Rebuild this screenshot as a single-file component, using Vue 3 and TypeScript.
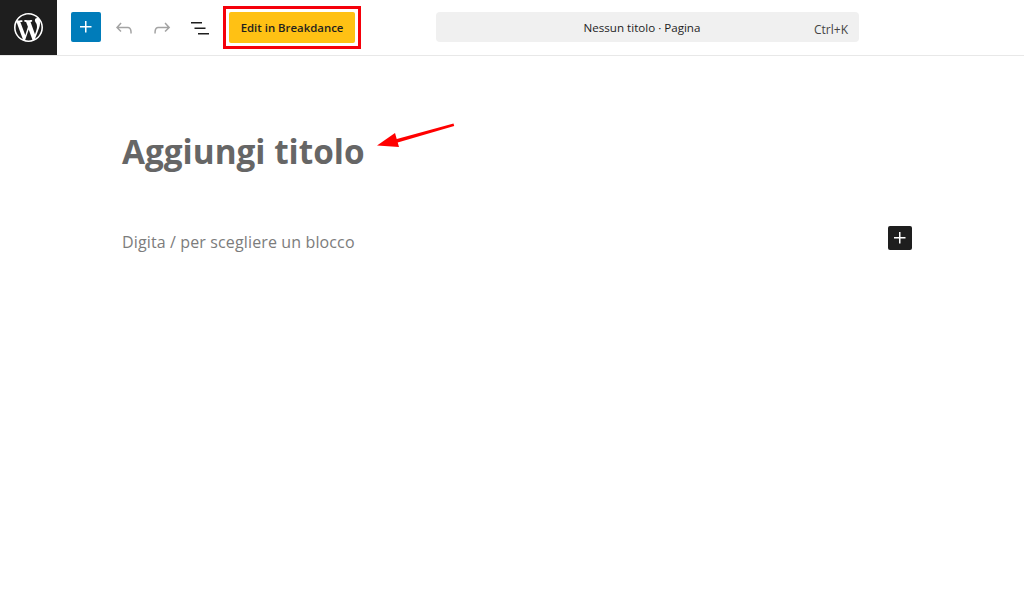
<script setup lang="ts">
const wp = "M20 10c0-5.51-4.49-10-10-10C4.48 0 0 4.49 0 10c0 5.52 4.48 10 10 10 5.51 0 10-4.48 10-10zM7.78 15.37L4.37 6.22c.55-.02 1.17-.08 1.17-.08.5-.06.44-1.13-.06-1.11 0 0-1.45.11-2.37.11-.18 0-.37 0-.58-.01C4.12 2.69 6.87 1.11 10 1.11c2.33 0 4.45.87 6.05 2.34-.68-.11-1.65.39-1.65 1.58 0 .74.45 1.36.9 2.1.35.61.55 1.36.55 2.46 0 1.49-1.4 5-1.4 5l-3.03-8.37c.54-.02.82-.17.82-.17.5-.05.44-1.25-.06-1.22 0 0-1.44.12-2.38.12-.87 0-2.33-.12-2.33-.12-.5-.03-.56 1.2-.06 1.22l.92.08 1.26 3.41zM17.41 10c.24-.64.74-1.87.43-4.25.7 1.29 1.05 2.71 1.05 4.25 0 3.29-1.73 6.24-4.4 7.78.97-2.59 1.94-5.2 2.92-7.78zM6.1 18.09C3.12 16.65 1.11 13.53 1.11 10c0-1.3.23-2.48.72-3.59C3.25 10.3 4.67 14.2 6.1 18.09zm4.03-6.63l2.58 6.98c-.86.29-1.76.45-2.71.45-.79 0-1.57-.11-2.29-.33.81-2.38 1.62-4.74 2.42-7.1z";
const plus = "M11 12.5V17.5H12.5V12.5H17.5V11H12.5V6H11V11H6V12.5H11Z";
</script>

<template>
  <div class="page">
    <header class="bar">
      <a class="logo">
        <svg width="29" height="29" viewBox="0 0 20 20"><path :d="wp" fill="#fff" /></svg>
      </a>
      <button class="add">
        <svg width="24" height="24" viewBox="0 0 24 24"><path :d="plus" fill="#fff" /></svg>
      </button>
      <span class="tool dim">
        <svg width="24" height="24" viewBox="0 0 24 24"><path d="M18.3 11.7c-.6-.6-1.4-.9-2.3-.9H6.7l2.9-3.3-1.1-1-4.5 5L8.5 16l1-1-2.7-2.7H16c.5 0 .9.2 1.3.5 1 1 1 3.4 1 4.5v.3h1.5v-.2c0-1.5 0-4.3-1.5-5.7z" /></svg>
      </span>
      <span class="tool dim">
        <svg width="24" height="24" viewBox="0 0 24 24"><path d="M15.6 6.5l-1.1 1 2.9 3.3H8c-.9 0-1.7.3-2.3.9-1.4 1.5-1.4 4.2-1.4 5.6v.2h1.5v-.3c0-1.1 0-3.5 1-4.5.3-.3.7-.5 1.3-.5h9.2L14.5 15l1.1 1.1 4.6-4.6-4.6-5z" /></svg>
      </span>
      <span class="tool">
        <svg width="24" height="24" viewBox="0 0 24 24"><path d="M3 6h11v1.5H3V6zm3.5 5.5h11V13h-11v-1.5zM21 17H10v1.5h11V17z" /></svg>
      </span>
      <div class="highlight">
        <button class="breakdance">Edit in Breakdance</button>
      </div>
      <div class="command">
        <span class="doc">Nessun titolo · Pagina</span>
        <span class="keys">Ctrl+K</span>
      </div>
    </header>
    <main class="canvas">
      <h1 class="title">Aggiungi titolo</h1>
      <div class="block">
        <p class="hint">Digita / per scegliere un blocco</p>
        <button class="inserter">
          <svg width="24" height="24" viewBox="0 0 24 24"><path :d="plus" fill="#fff" /></svg>
        </button>
      </div>
      <svg class="arrow" width="90" height="36" viewBox="0 0 90 36">
        <path d="M77.5 0.6 L19 16.4 L20 20 L78.2 3 Z" fill="#ff0000" />
        <path d="M1 22.5 L19 10 L21 17 L23 24 Z" fill="#ff0000" />
      </svg>
    </main>
  </div>
</template>

<style>
html, body { margin: 0; background: #fff; }
</style>

<style scoped>
.page {
  width: 1024px;
  height: 590px;
  overflow: hidden;
  background: #fff;
  font-family: "Open Sans", "Noto Sans", sans-serif;
  display: flex;
  flex-direction: column;
}
.bar {
  height: 55px;
  flex: none;
  display: flex;
  align-items: center;
  border-bottom: 1px solid #e8e8e8;
  position: relative;
}
.logo {
  width: 57px;
  height: 55px;
  background: #1e1e1e;
  display: flex;
  align-items: center;
  justify-content: center;
  flex: none;
}
.add {
  width: 30px;
  height: 30px;
  margin-left: 14px;
  margin-right: 4px;
  margin-bottom: 1px;
  padding: 0;
  border: 0;
  border-radius: 2px;
  background: #007cba;
  display: flex;
  align-items: center;
  justify-content: center;
}
.tool {
  width: 38px;
  height: 30px;
  display: flex;
  align-items: center;
  justify-content: center;
  fill: #1e1e1e;
}
.tool.dim { fill: #a3a3a3; }
.highlight {
  margin-left: 4px;
  padding: 3px;
  border: 3px solid #f5000a;
  display: flex;
}
.breakdance {
  width: 126px;
  height: 31px;
  padding: 0;
  border: 0;
  border-radius: 2px;
  background: #ffc114;
  color: #1e1e1e;
  font: 600 11.4px "Open Sans", "Noto Sans", sans-serif;
}
.command {
  margin-left: 75px;
  margin-bottom: 1px;
  width: 423px;
  height: 30px;
  background: #f0f0f0;
  border-radius: 4px;
  display: flex;
  align-items: center;
  justify-content: center;
  position: relative;
  font-size: 11.6px;
  color: #1e1e1e;
}
.doc {
  margin-right: 11px;
}
.keys {
  position: absolute;
  right: 11px;
  top: 9px;
  font-size: 12px;
  color: #444;
}
.canvas {
  flex: 1;
  position: relative;
  padding: 0 112px 0 122px;
}
.title {
  margin: 73px 0 0;
  font-size: 33.3px;
  line-height: 44px;
  font-weight: 700;
  color: #666;
}
.block {
  margin-top: 53px;
  display: flex;
  align-items: flex-start;
  justify-content: space-between;
}
.hint {
  margin: 4px 0 0;
  font-size: 16px;
  line-height: 24px;
  letter-spacing: 0.13px;
  color: #7c7c7c;
}
.inserter {
  width: 24px;
  height: 24px;
  padding: 0;
  border: 0;
  border-radius: 2px;
  background: #1e1e1e;
  display: flex;
}
.arrow {
  position: absolute;
  left: 376px;
  top: 67px;
}
</style>
